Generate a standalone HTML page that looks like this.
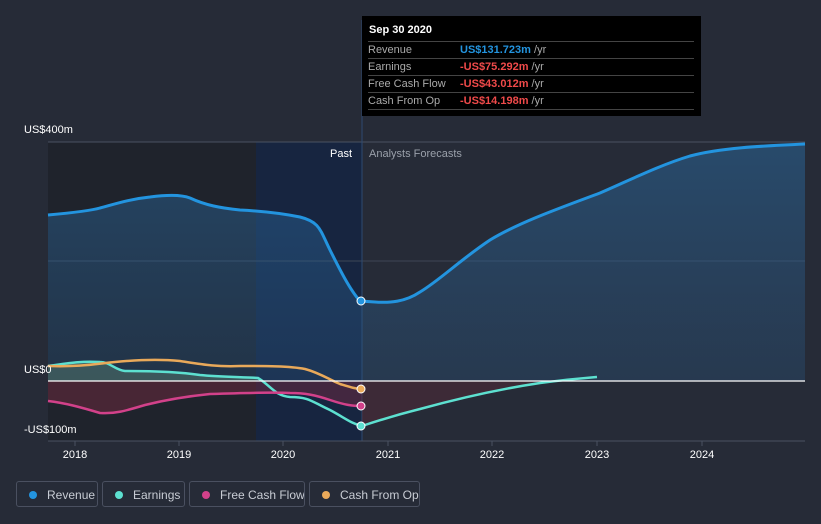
<!DOCTYPE html>
<html><head><meta charset="utf-8"><style>
body{margin:0;width:821px;height:524px;background:#262b37;overflow:hidden;font-family:"Liberation Sans",sans-serif}
svg{position:absolute;left:0;top:0}
.tt{position:absolute;left:362px;top:16px;width:339px;height:100px;background:#000;color:#fff;font-size:11px}
.tt .h{font-weight:bold;padding:8px 0 0 7px;height:14px}
.tt .r{margin:0 7px 0 6px;border-top:1px solid #444;height:16px;line-height:16px;display:flex;color:#aaa}
.tt .r span:first-child{width:92px}
.b{color:#2394df;font-weight:bold}.n{color:#f04a4a;font-weight:bold}
.lg{position:absolute;top:481px;height:26px;border:1px solid #4a5060;border-radius:3px;color:#c8ccd4;font-size:12px;line-height:26px;box-sizing:border-box;white-space:nowrap;overflow:hidden}
.lg i{display:inline-block;width:8px;height:8px;border-radius:50%;margin:0 10px 0 12px;vertical-align:0}
</style></head><body>
<svg width="821" height="524">
<defs>
<linearGradient id="rg" x1="0" y1="0" x2="0" y2="1"><stop offset="0" stop-color="#2a6aa0" stop-opacity=".5"/><stop offset="1" stop-color="#2a5a88" stop-opacity=".3"/></linearGradient>
</defs>
<rect x="48" y="142" width="208" height="299" fill="#1f232c"/>
<rect x="256" y="142" width="106" height="299" fill="#172540"/>
<line x1="48" y1="142" x2="805" y2="142" stroke="#4a5262"/>
<line x1="48" y1="261" x2="805" y2="261" stroke="#3e4656"/>
<line x1="362" y1="20" x2="362" y2="441" stroke="#2e4a70"/>
<path d="M48,215 C70,213 90,211 100,208 C115,204 130,199 150,197 C165,195 180,194 190,198 C205,205 220,208 240,210 C260,211 280,213 300,217 C320,222 320,230 330,250 C340,270 350,290 360,301 L375,302 C390,303 405,302 420,292 C440,280 460,260 490,240 C520,222 560,208 600,193 C630,180 660,165 690,156 C720,148 760,146 805,144 L805,381 L48,381Z" fill="url(#rg)"/>
<path d="M48,366 C70,363 80,361 100,362 C110,362 115,370 125,371 C150,371 180,372 200,375 C220,377 245,377 258,378 L262,381 L48,381Z" fill="#6a9a80" opacity=".35"/>
<path d="M48,381 L362,381 L362,406 C352,406 345,405 330,400 C315,395 305,393 290,393 C270,392 240,393 210,394 C190,396 165,400 145,405 C125,411 115,414 100,413 C80,407 65,403 48,401Z" fill="#7a2a40" opacity=".45"/>
<path d="M362,381 L560,381 C520,386 460,398 420,409 C400,414 380,420 362,426Z" fill="#5a2a38" opacity=".45"/>
<path d="M48,215 C70,213 90,211 100,208 C115,204 130,199 150,197 C165,195 180,194 190,198 C205,205 220,208 240,210 C260,211 280,213 300,217 C320,222 320,230 330,250 C340,270 350,290 360,301 L375,302 C390,303 405,302 420,292 C440,280 460,260 490,240 C520,222 560,208 600,193 C630,180 660,165 690,156 C720,148 760,146 805,144" fill="none" stroke="#2394df" stroke-width="3"/>
<path d="M48,366 C70,363 80,361 100,362 C110,362 115,370 125,371 C150,371 180,372 200,375 C220,377 245,377 258,378 C270,385 275,396 290,397 C310,397 312,402 330,410 C345,418 352,424 362,426 C380,420 400,414 420,409 C460,398 500,389 540,383 C570,379 585,378 597,377" fill="none" stroke="#5de0d0" stroke-width="2.5"/>
<path d="M48,401 C65,403 80,407 100,413 C115,414 125,411 145,405 C165,400 190,396 210,394 C240,393 270,392 290,393 C305,393 315,395 330,400 C345,405 352,406 362,406" fill="none" stroke="#d2418a" stroke-width="2.5"/>
<path d="M48,366 C80,367 95,364 115,362 C135,360 160,359 180,361 C200,364 215,367 240,366 C265,366 290,366 305,369 C320,373 330,380 340,384 C350,387 356,389 362,389" fill="none" stroke="#e9a95a" stroke-width="2.5"/>
<line x1="48" y1="381" x2="805" y2="381" stroke="#fff" stroke-width="1.2"/>
<line x1="48" y1="441" x2="805" y2="441" stroke="#4a5262"/>
<circle cx="361" cy="301" r="4" fill="#2394df" stroke="#fff"/>
<circle cx="361" cy="389" r="4" fill="#e9a95a" stroke="#fff"/>
<circle cx="361" cy="406" r="4" fill="#d2418a" stroke="#fff"/>
<circle cx="361" cy="426" r="4" fill="#5de0d0" stroke="#fff"/>
<g font-size="11" fill="#fff">
<text x="24" y="133">US$400m</text>
<text x="24" y="373">US$0</text>
<text x="24" y="433">-US$100m</text>
<text x="330" y="157">Past</text>
<text x="369" y="157" fill="#9aa0aa">Analysts Forecasts</text>
</g>
<g font-size="11" fill="#fff" text-anchor="middle">
<text x="75" y="458">2018</text><text x="179" y="458">2019</text><text x="283" y="458">2020</text>
<text x="388" y="458">2021</text><text x="492" y="458">2022</text><text x="597" y="458">2023</text><text x="702" y="458">2024</text>
</g>
<g stroke="#4a5262"><line x1="75" y1="441" x2="75" y2="446"/><line x1="179" y1="441" x2="179" y2="446"/><line x1="283" y1="441" x2="283" y2="446"/><line x1="388" y1="441" x2="388" y2="446"/><line x1="492" y1="441" x2="492" y2="446"/><line x1="597" y1="441" x2="597" y2="446"/><line x1="702" y1="441" x2="702" y2="446"/></g>
</svg>
<div class="tt">
<div class="h">Sep 30 2020</div>
<div class="r" style="margin-top:3px"><span>Revenue</span><span><b class="b">US$131.723m</b> /yr</span></div>
<div class="r"><span>Earnings</span><span><b class="n">-US$75.292m</b> /yr</span></div>
<div class="r"><span>Free Cash Flow</span><span><b class="n">-US$43.012m</b> /yr</span></div>
<div class="r"><span>Cash From Op</span><span><b class="n">-US$14.198m</b> /yr</span></div>
<div class="r"></div>
</div>
<div class="lg" style="left:16px;width:82px"><i style="background:#2394df"></i>Revenue</div>
<div class="lg" style="left:102px;width:83px"><i style="background:#5de0d0"></i>Earnings</div>
<div class="lg" style="left:189px;width:116px"><i style="background:#d2418a"></i>Free Cash Flow</div>
<div class="lg" style="left:309px;width:111px"><i style="background:#e9a95a"></i>Cash From Op</div>
</body></html>
